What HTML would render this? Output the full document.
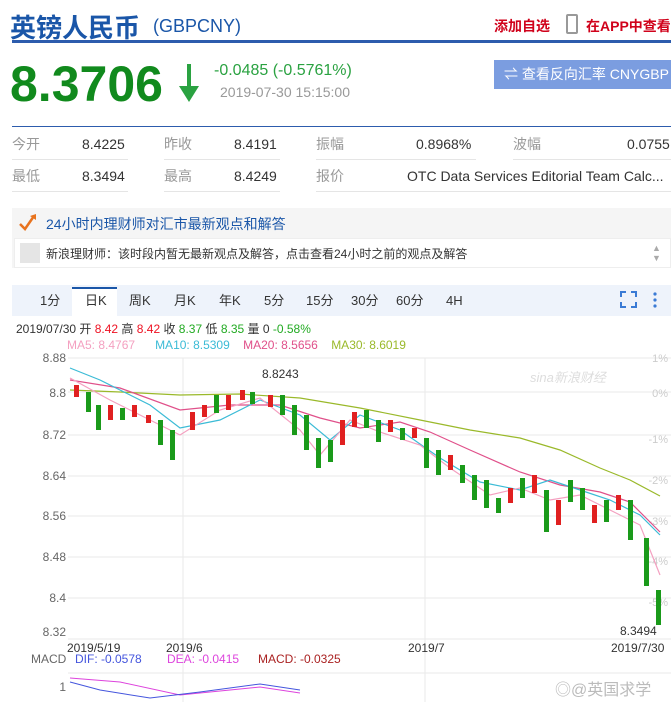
<!DOCTYPE html>
<html><head><meta charset="utf-8"><style>
*{margin:0;padding:0;box-sizing:border-box}
html,body{width:671px;height:702px;overflow:hidden}
body{background:#fff;font-family:"Liberation Sans","Noto Sans CJK SC",sans-serif;position:relative;color:#333}
.a{position:absolute;white-space:nowrap}
.row{position:absolute;font-size:14px;color:#999;line-height:16px}
.v{color:#333}
.t{position:absolute;top:293px;font-size:13px;line-height:16px;color:#333}
</style></head><body>
<div class="a" style="left:10px;top:8px;font-size:26px;font-weight:bold;color:#1a56a8">英镑人民币</div>
<div class="a" style="left:153px;top:16px;font-size:18px;color:#1a56a8">(GBPCNY)</div>
<div class="a" style="left:494px;top:16px;font-size:14px;color:#d0021b;font-weight:bold">添加自选</div>
<div class="a" style="left:566px;top:14px;width:12px;height:20px;border:2px solid #999;border-radius:2px"></div>
<div class="a" style="left:586px;top:16px;font-size:14px;color:#d0021b;font-weight:bold">在APP中查看</div>
<div class="a" style="left:12px;top:40px;width:659px;height:3px;background:#2d5cad"></div>
<div class="a" style="left:10px;top:54px;font-size:50px;line-height:60px;font-weight:bold;color:#118a1d">8.3706</div>
<svg class="a" style="left:176px;top:62px" width="26" height="42"><path d="M13 2V32" stroke="#2aa241" stroke-width="4"/><path d="M3 24L13 40L23 24Z" fill="#2aa241"/></svg>
<div class="a" style="left:214px;top:62px;font-size:16px;color:#2aa241">-0.0485 (-0.5761%)</div>
<div class="a" style="left:220px;top:84px;font-size:14px;color:#999">2019-07-30 15:15:00</div>
<div class="a" style="left:494px;top:60px;width:177px;height:29px;background:#7b9de0;color:#fff;font-size:14px;line-height:29px;padding-left:10px">⇌ 查看反向汇率 CNYGBP</div>
<div class="a" style="left:12px;top:126px;width:659px;height:1px;background:#2d5cad"></div>
<div class="row" style="left:12px;top:136px">今开</div><div class="row v" style="left:82px;top:136px">8.4225</div>
<div class="row" style="left:164px;top:136px">昨收</div><div class="row v" style="left:234px;top:136px">8.4191</div>
<div class="row" style="left:316px;top:136px">振幅</div><div class="row v" style="left:416px;top:136px">0.8968%</div>
<div class="row" style="left:513px;top:136px">波幅</div><div class="row v" style="left:627px;top:136px">0.0755</div>
<div class="row" style="left:12px;top:168px">最低</div><div class="row v" style="left:82px;top:168px">8.3494</div>
<div class="row" style="left:164px;top:168px">最高</div><div class="row v" style="left:234px;top:168px">8.4249</div>
<div class="row" style="left:316px;top:168px">报价</div><div class="row v" style="left:407px;top:168px">OTC Data Services Editorial Team Calc...</div>
<div class="a" style="left:12px;top:159px;width:116px;height:1px;background:#e5e5e5"></div>
<div class="a" style="left:164px;top:159px;width:116px;height:1px;background:#e5e5e5"></div>
<div class="a" style="left:316px;top:159px;width:160px;height:1px;background:#e5e5e5"></div>
<div class="a" style="left:513px;top:159px;width:158px;height:1px;background:#e5e5e5"></div>
<div class="a" style="left:12px;top:191px;width:116px;height:1px;background:#e5e5e5"></div>
<div class="a" style="left:164px;top:191px;width:116px;height:1px;background:#e5e5e5"></div>
<div class="a" style="left:316px;top:191px;width:355px;height:1px;background:#e5e5e5"></div>
<div class="a" style="left:12px;top:208px;width:659px;height:60px;background:#f5f5f5"></div>
<svg class="a" style="left:17px;top:212px" width="22" height="20"><path d="M3 12L8 17L17 4" stroke="#e8731e" stroke-width="2.5" fill="none"/><path d="M13 4L19 2L19 8Z" fill="#e8731e"/></svg>
<div class="a" style="left:46px;top:214px;font-size:14px;color:#1a56a8">24小时内理财师对汇市最新观点和解答</div>
<div class="a" style="left:14px;top:238px;width:657px;height:30px;background:#fff;border:1px solid #eee"></div>
<div class="a" style="left:20px;top:243px;width:20px;height:20px;background:#e5e5e5"></div>
<div class="a" style="left:46px;top:245px;font-size:12px;color:#333">新浪理财师：该时段内暂无最新观点及解答，点击查看24小时之前的观点及解答</div>
<div class="a" style="left:652px;top:243px;font-size:9px;color:#aaa;line-height:10px">▲<br>▼</div>
<div class="a" style="left:12px;top:285px;width:659px;height:31px;background:#eef3fb"></div>
<div class="a" style="left:72px;top:287px;width:45px;height:30px;background:#fff;border-top:2px solid #1a56a8"></div>
<div class="t" style="left:40px">1分</div>
<div class="t" style="left:85px">日K</div>
<div class="t" style="left:129px">周K</div>
<div class="t" style="left:174px">月K</div>
<div class="t" style="left:219px">年K</div>
<div class="t" style="left:264px">5分</div>
<div class="t" style="left:306px">15分</div>
<div class="t" style="left:351px">30分</div>
<div class="t" style="left:396px">60分</div>
<div class="t" style="left:446px">4H</div>
<svg class="a" style="left:620px;top:291px" width="40" height="18"><path d="M1 6V1H6M11 1H16V6M16 11V16H11M6 16H1V11" stroke="#3a7bd5" stroke-width="2" fill="none"/><circle cx="35" cy="3" r="1.6" fill="#3a7bd5"/><circle cx="35" cy="9" r="1.6" fill="#3a7bd5"/><circle cx="35" cy="15" r="1.6" fill="#3a7bd5"/></svg>
<div class="a" style="left:16px;top:322px;font-size:12px;line-height:14px">2019/07/30 开 <span style="color:#e12">8.42</span> 高 <span style="color:#e12">8.42</span> 收 <span style="color:#2a2">8.37</span> 低 <span style="color:#2a2">8.35</span> 量 0 <span style="color:#2a2">-0.58%</span></div>
<div class="a" style="left:67px;top:338px;font-size:12px;line-height:14px"><span style="color:#f4a0c0">MA5: 8.4767</span>&nbsp;&nbsp;&nbsp;&nbsp;&nbsp; <span style="color:#3bbbd6">MA10: 8.5309</span>&nbsp;&nbsp;&nbsp; <span style="color:#e0508a">MA20: 8.5656</span>&nbsp;&nbsp;&nbsp; <span style="color:#9ab92a">MA30: 8.6019</span></div>
<svg class="a" style="left:0;top:350px" width="671" height="352" font-family="Liberation Sans, sans-serif" font-size="12">
<g stroke="#eaeaea" stroke-width="1">
<line x1="68" y1="8" x2="671" y2="8"/><line x1="68" y1="42" x2="671" y2="42"/><line x1="68" y1="85" x2="671" y2="85"/><line x1="68" y1="126" x2="671" y2="126"/><line x1="68" y1="166" x2="671" y2="166"/><line x1="68" y1="207" x2="671" y2="207"/><line x1="68" y1="248" x2="671" y2="248"/><line x1="68" y1="289" x2="671" y2="289"/>
<line x1="183" y1="8" x2="183" y2="352"/><line x1="425" y1="8" x2="425" y2="352"/><line x1="68" y1="323" x2="671" y2="323"/>
</g>
<g fill="#666" text-anchor="end"><text x="66" y="12">8.88</text><text x="66" y="47">8.8</text><text x="66" y="89">8.72</text><text x="66" y="130">8.64</text><text x="66" y="170">8.56</text><text x="66" y="211">8.48</text><text x="66" y="252">8.4</text><text x="66" y="286">8.32</text><text x="66" y="341">1</text></g>
<g fill="#ccc" text-anchor="end" font-size="11"><text x="668" y="12">1%</text><text x="668" y="47">0%</text><text x="668" y="93">-1%</text><text x="668" y="134">-2%</text><text x="668" y="175">-3%</text><text x="668" y="215">-4%</text><text x="668" y="256">-5%</text></g>
<text x="530" y="32" fill="#ddd" font-size="13" font-style="italic">sina新浪财经</text>
<text x="262" y="28" fill="#333">8.8243</text>
<text x="620" y="285" fill="#333">8.3494</text>
<g fill="#333"><text x="67" y="302">2019/5/19</text><text x="166" y="302">2019/6</text><text x="408" y="302">2019/7</text><text x="611" y="302">2019/7/30</text></g>
<text x="31" y="313" fill="#666">MACD</text><text x="75" y="313" fill="#4455dd">DIF: -0.0578</text><text x="167" y="313" fill="#dd44dd">DEA: -0.0415</text><text x="258" y="313" fill="#aa2222">MACD: -0.0325</text>
<polyline fill="none" stroke="#9ab92a" stroke-width="1.2" points="70,40 120,42 180,45 240,44 300,48 360,58 420,70 470,80 520,88 560,100 600,118 630,130 660,146"/>
<polyline fill="none" stroke="#e0508a" stroke-width="1.2" points="70,30 120,38 180,60 230,55 280,55 320,68 360,78 400,72 430,82 470,100 520,122 560,135 600,142 630,152 660,182"/>
<polyline fill="none" stroke="#3bbbd6" stroke-width="1.2" points="70,18 100,30 150,55 180,78 220,70 260,50 300,65 330,90 360,65 400,80 440,108 480,132 520,140 550,130 580,140 610,150 640,165 660,185"/>
<polyline fill="none" stroke="#f4a0c0" stroke-width="1.2" points="70,28 110,50 150,70 180,85 220,60 260,48 300,80 320,105 350,70 380,82 420,95 450,118 490,145 520,138 550,150 580,145 610,160 640,175 660,225"/>
<g fill="#1a9a1a">
<rect x="86" y="42" width="5" height="20"/><rect x="96" y="55" width="5" height="25"/><rect x="120" y="58" width="5" height="12"/><rect x="158" y="70" width="5" height="25"/><rect x="170" y="80" width="5" height="30"/><rect x="214" y="45" width="5" height="18"/><rect x="250" y="42" width="5" height="12"/><rect x="280" y="45" width="5" height="20"/><rect x="292" y="55" width="5" height="30"/><rect x="304" y="65" width="5" height="35"/><rect x="316" y="88" width="5" height="30"/><rect x="328" y="90" width="5" height="22"/><rect x="364" y="60" width="5" height="18"/><rect x="376" y="70" width="5" height="22"/><rect x="400" y="78" width="5" height="12"/><rect x="424" y="88" width="5" height="30"/><rect x="436" y="100" width="5" height="25"/><rect x="460" y="115" width="5" height="18"/><rect x="472" y="125" width="5" height="25"/><rect x="484" y="130" width="5" height="28"/><rect x="496" y="148" width="5" height="15"/><rect x="520" y="128" width="5" height="20"/><rect x="544" y="140" width="5" height="42"/><rect x="568" y="130" width="5" height="22"/><rect x="580" y="138" width="5" height="22"/><rect x="604" y="150" width="5" height="22"/><rect x="628" y="150" width="5" height="40"/><rect x="644" y="188" width="5" height="48"/><rect x="656" y="240" width="5" height="35"/>
</g>
<g fill="#e02020">
<rect x="74" y="35" width="5" height="12"/><rect x="108" y="55" width="5" height="15"/><rect x="132" y="55" width="5" height="12"/><rect x="146" y="65" width="5" height="8"/><rect x="190" y="62" width="5" height="18"/><rect x="202" y="55" width="5" height="12"/><rect x="226" y="45" width="5" height="15"/><rect x="240" y="40" width="5" height="10"/><rect x="268" y="45" width="5" height="12"/><rect x="340" y="70" width="5" height="25"/><rect x="352" y="62" width="5" height="15"/><rect x="388" y="70" width="5" height="12"/><rect x="412" y="78" width="5" height="10"/><rect x="448" y="105" width="5" height="15"/><rect x="508" y="138" width="5" height="15"/><rect x="532" y="125" width="5" height="18"/><rect x="556" y="150" width="5" height="25"/><rect x="592" y="155" width="5" height="18"/><rect x="616" y="145" width="5" height="15"/>
</g>
<polyline fill="none" stroke="#dd44dd" points="70,328 120,332 180,345 230,340 260,337 300,343"/>
<polyline fill="none" stroke="#4455dd" points="70,332 100,340 150,348 200,342 260,334 300,340"/>
<text x="555" y="345" fill="#bbb" font-size="16">◎@英国求学</text>
</svg>
</body></html>
